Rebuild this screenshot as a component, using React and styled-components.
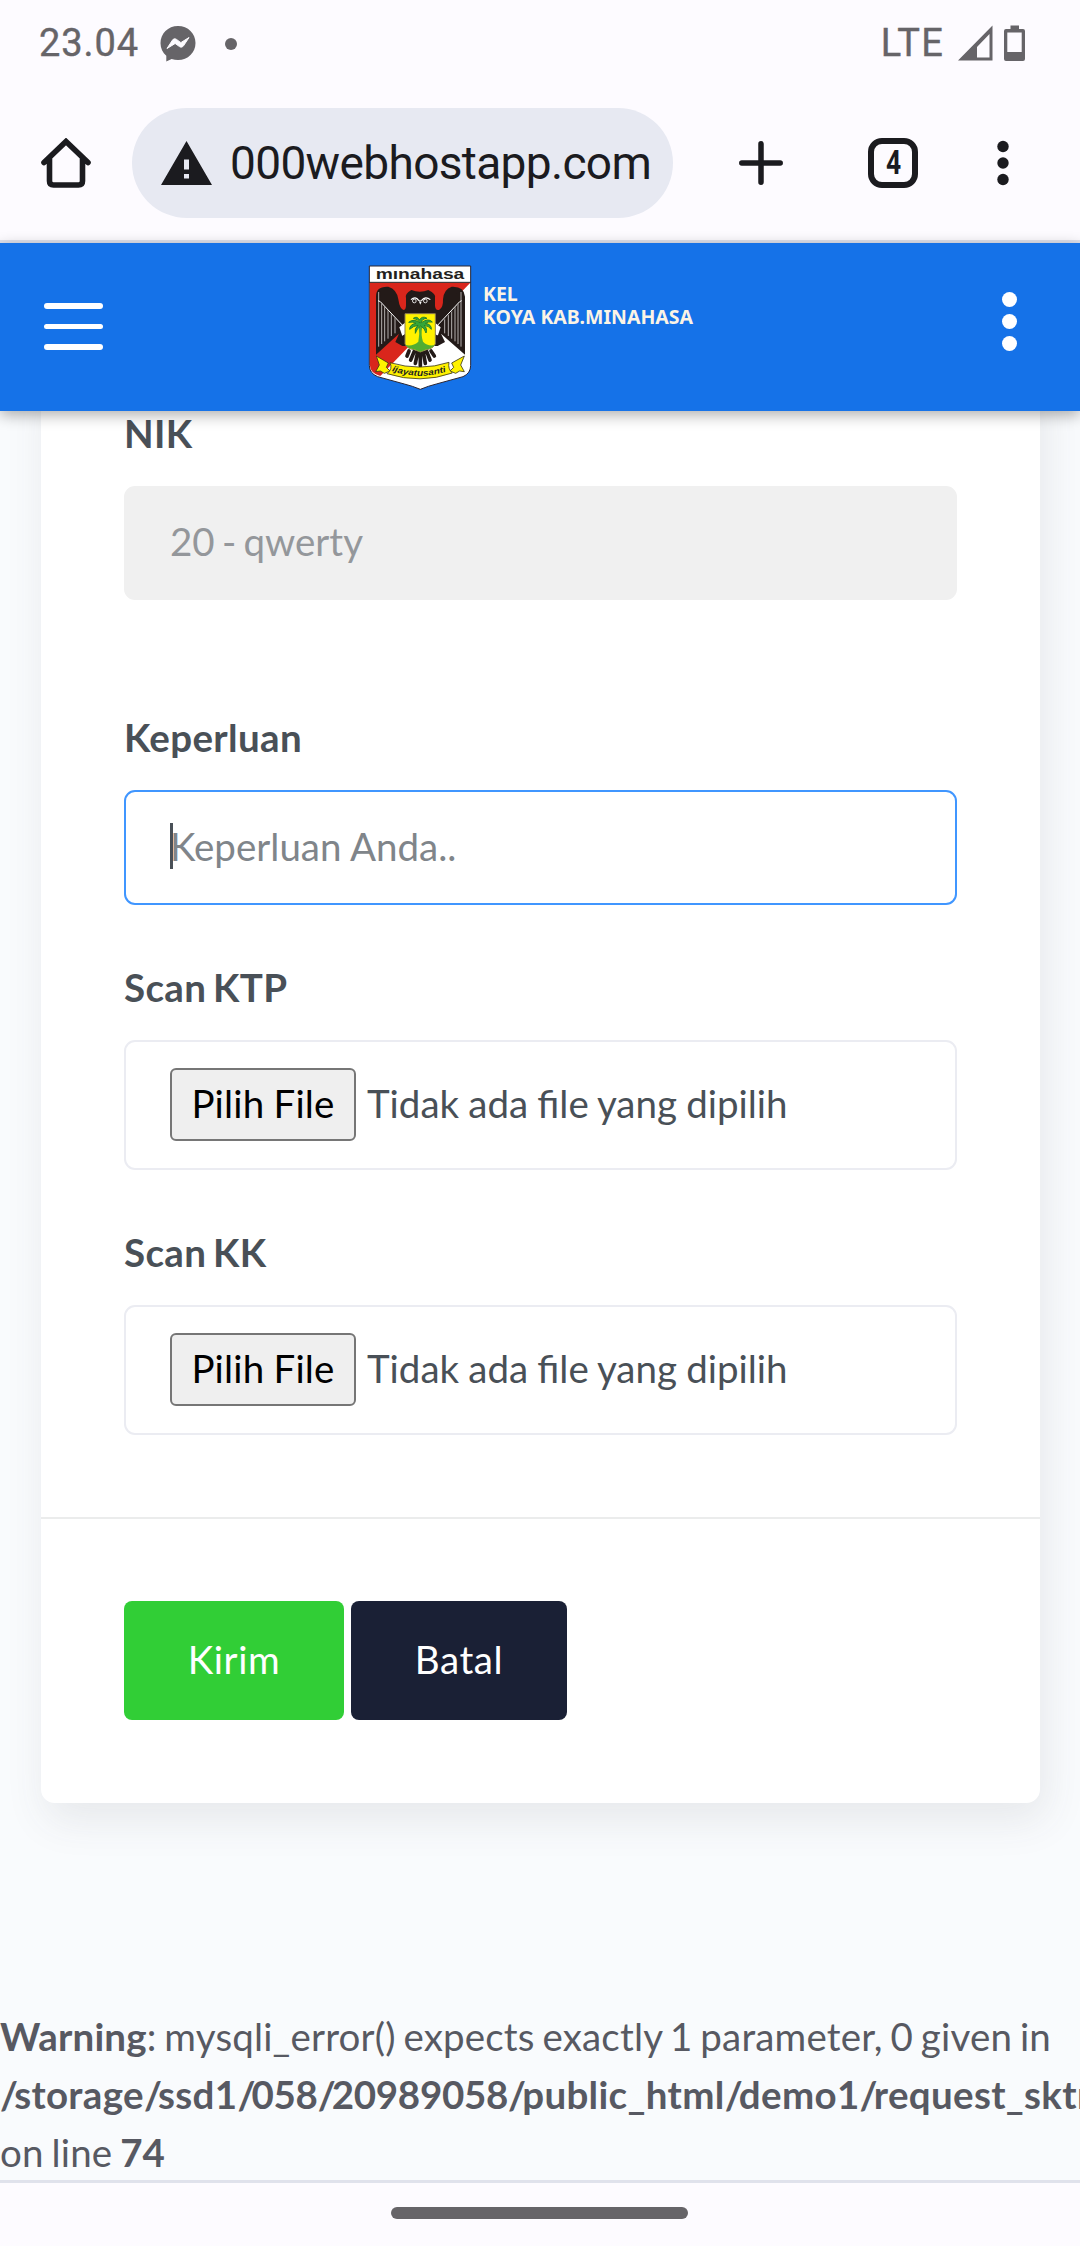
import React, { Fragment } from "react";
import styled, { createGlobalStyle } from "styled-components";

const GlobalStyle = createGlobalStyle`
  * { box-sizing: border-box; }
  body {
    margin: 0;
    background: #fdfbff;
    font-family: Lato, sans-serif;
    -webkit-font-smoothing: antialiased;
  }
`;

const Screen = styled.div`
  width: 1080px;
  height: 2246px;
  display: flex;
  flex-direction: column;
  overflow: hidden;
  background: #fdfbff;
`;

const StatusBar = styled.div`
  height: 84px;
  flex: none;
  display: flex;
  align-items: center;
  padding: 1px 55px 0 39px;
  font-family: Roboto, sans-serif;
  color: #666468;
`;

const Clock = styled.span`
  width: 100px;
  font-size: 38px;
  line-height: 44px;
  letter-spacing: 0.9px;
  -webkit-text-stroke: 0.4px #666468;
`;

const MessengerIcon = styled.svg`
  margin: 2px 0 0 20px;
  width: 38px;
  height: 38px;
`;

const NotificationDot = styled.span`
  width: 12px;
  height: 12px;
  margin: 2px auto 0 28px;
  border-radius: 50%;
  background: #666468;
`;

const NetworkLabel = styled.span`
  font-size: 38px;
  line-height: 44px;
  letter-spacing: 1.2px;
  -webkit-text-stroke: 0.4px #666468;
`;

const StatusIcon = styled.svg`
  margin-left: ${(p) => p.$gap}px;
  width: ${(p) => p.$w}px;
  height: 36px;
`;

const BrowserBar = styled.div`
  height: 159px;
  flex: none;
  display: flex;
  align-items: flex-start;
  padding: 24px 0 0 41px;
  border-bottom: 3px solid #e0e2ec;
`;

const BarIcon = styled.svg`
  flex: none;
  width: ${(p) => p.$w || 50}px;
  height: 50px;
  margin: 30px 0 0 ${(p) => p.$gap || 0}px;
`;

const AddressPill = styled.div`
  width: 541px;
  height: 110px;
  margin-left: 41px;
  padding-left: 29px;
  display: flex;
  align-items: center;
  border-radius: 55px;
  background: #e7e9f2;
  overflow: hidden;
`;

const WarningIcon = styled.svg`
  flex: none;
  width: 52px;
  height: 46px;
`;

const Address = styled.span`
  margin-left: 17px;
  font-family: Roboto, sans-serif;
  font-size: 46px;
  line-height: 56px;
  letter-spacing: -0.65px;
  white-space: nowrap;
  color: #1b1b1f;
`;

const TabCounter = styled.div`
  width: 50px;
  height: 50px;
  margin: 30px 0 0 82px;
  display: flex;
  align-items: center;
  justify-content: center;
  border: 6px solid #1b1b1f;
  border-radius: 14px;
  font-family: Roboto, sans-serif;
  font-weight: 700;
  font-size: 33px;
  line-height: 38px;
  color: #1b1b1f;
`;

const TabNumber = styled.span`
  transform: scaleX(0.8);
`;

const SiteHeader = styled.header`
  position: relative;
  z-index: 1;
  height: 168px;
  flex: none;
  display: flex;
  align-items: flex-start;
  background: #1572e8;
  box-shadow: 0 4px 14px rgba(0, 0, 0, 0.32);
`;

const MenuToggle = styled.div`
  width: 59px;
  margin: 60px 0 0 44px;
  display: flex;
  flex-direction: column;
  gap: 15px;
`;

const MenuLine = styled.span`
  height: 5.5px;
  border-radius: 3px;
  background: #fff;
`;

const Emblem = styled.svg`
  width: 110px;
  height: 132px;
  margin: 19px 0 0 262px;
`;

const BrandName = styled.div`
  width: 240px;
  margin: 39px 0 0 8px;
  font-family: "Noto Sans", sans-serif;
  font-weight: 700;
  font-size: 19.5px;
  line-height: 23px;
  white-space: nowrap;
  color: #fbf4e6;
`;

const MoreDots = styled.div`
  margin: 49px 0 0 279px;
  display: flex;
  flex-direction: column;
  gap: 7px;
`;

const Dot = styled.span`
  width: 15px;
  height: 15px;
  border-radius: 50%;
  background: #fff;
`;

const Page = styled.main`
  height: 1769px;
  flex: none;
  overflow: hidden;
  background: #f9fbfd;
`;

const Card = styled.section`
  height: 1432px;
  margin: -40px 40px 0 41px;
  padding-top: 42px;
  border-radius: 13.75px;
  background: #fff;
  box-shadow: 5.5px 16.5px 41px rgba(69, 65, 78, 0.1);
`;

const Form = styled.div`
  display: flex;
  flex-direction: column;
  padding: 0 83px;
`;

const Group = styled.div`
  margin-bottom: ${(p) => p.$after}px;
`;

const Label = styled.div`
  height: 40px;
  margin-bottom: 33px;
  font-size: 38.5px;
  font-weight: 700;
  line-height: 40px;
  letter-spacing: 0.35px;
  word-spacing: -3px;
  color: #495057;
`;

const borders = { focus: "#4096ff", idle: "#ebecf2", disabled: "#f0f0f0" };

const Field = styled.div`
  height: ${(p) => p.$h}px;
  padding: 0 44px ${(p) => (p.$state === "disabled" ? 4 : 3)}px;
  display: flex;
  align-items: center;
  border: 2px solid ${(p) => borders[p.$state]};
  border-radius: 11px;
  background: ${(p) => (p.$state === "disabled" ? "#f0f0f0" : "#fff")};
  font-size: 38.5px;
  line-height: 46px;
  word-spacing: ${(p) => (p.$state === "disabled" ? -2.6 : 0)}px;
  white-space: nowrap;
  color: ${(p) => (p.$state === "disabled" ? "#94979b" : "#80858a")};
`;

const Caret = styled.span`
  width: 3px;
  height: 46px;
  margin-right: -3px;
  background: #495057;
`;

const FileField = styled(Field)`
  padding: 0 44px 2px;
  word-spacing: -0.7px;
  color: #495057;
`;

const FileButton = styled.span`
  width: 186px;
  height: 73px;
  margin-right: 11px;
  padding-bottom: 2px;
  display: flex;
  align-items: center;
  justify-content: center;
  border: 2px solid #767676;
  border-radius: 6px;
  background: #efefef;
  letter-spacing: 0.15px;
  color: #000;
`;

const FileName = styled.span`
  padding-bottom: 2px;
`;

const Actions = styled.div`
  display: flex;
  gap: 7px;
  padding: 82px 83px 0;
  border-top: 2px solid #ebecec;
`;

const ActionButton = styled.div`
  width: ${(p) => p.$w}px;
  height: 119px;
  padding-bottom: 4px;
  display: flex;
  align-items: center;
  justify-content: center;
  border-radius: 8px;
  background: ${(p) => p.$color};
  font-size: 38.5px;
  letter-spacing: 0.6px;
  color: #fff;
`;

const ServerWarning = styled.p`
  margin: 204px 0 0;
  font-size: 38.5px;
  line-height: 58px;
  letter-spacing: 0.17px;
  word-spacing: -2.2px;
  white-space: nowrap;
  color: #575962;
`;

const PathPart = styled.b`
  letter-spacing: ${(p) => (p.$numeric ? -0.3 : 0.33)}px;
`;

const Slash = styled.b`
  letter-spacing: -3.8px;
`;

const GestureBar = styled.div`
  height: 66px;
  flex: none;
  display: flex;
  justify-content: center;
  padding: 24px 1px 0 0;
  border-top: 3px solid #e0e2ec;
`;

const GestureHandle = styled.span`
  width: 297px;
  height: 12px;
  border-radius: 6px;
  background: #666468;
`;

const wingFeathers = [
  "M41 90V254", "M50 98V246", "M59 108V238", "M69 118V230", "M79 129V222", "M90 140V214",
  "M288 90V254", "M279 98V246", "M270 108V238", "M260 118V230", "M250 129V222", "M239 140V214",
];

function MinahasaEmblem() {
  return (
    <Emblem viewBox="0 0 330 396">
      <path d="M13 12H317V310Q317 334 294 344L214 366Q190 372 166 382Q142 372 118 366L38 344Q13 334 13 310Z" fill="#fff" stroke="#2a2633" strokeWidth="3" />
      <path d="M14.500 62H316L46 342Q15 333 14.500 308Z" fill="#d9261c" />
      <path d="M13 61H317" stroke="#231f20" strokeWidth="3" />
      <text x="165" y="52" textAnchor="middle" textLength="266" lengthAdjust="spacingAndGlyphs" fontFamily="Liberation Sans, sans-serif" fontWeight="700" fontSize="42" fill="#231f20">mınahasa</text>
      <path d="M139 84Q165 94 190 84Q214 96 210 108V132Q212 147 223 143Q235 137 234 112Q236 82 260 74Q298 72 300 104V278L228 215L240 240L218 252H112L91 240L102 215L33 278V104Q32 72 70 74Q96 82 100 112Q104 141 116 144Q124 143 123 126L123 109Q118 96 139 84Z" fill="#231a18" />
      {wingFeathers.map((d) => (
        <path key={d} d={d} stroke="#d8d5d4" strokeWidth="2.400" />
      ))}
      <path d="M48 86L104 146V184L44 119ZM282 86L228 146V184L286 119Z" fill="#231a18" />
      <path d="M39 116L46 119L120 198M290 116L284 119L210 198" stroke="#fff" strokeWidth="3" fill="none" />
      <path d="M103 196L120 182V216L112 222ZM227 196L210 182V216L218 222Z" fill="#fff" />
      <path d="M112 222L119 218V252L111 246ZM214 218L222 222L218 250H212Z" fill="#231a18" />
      <path d="M138 113Q151 101 161 115Q165 119 170 115Q181 101 196 113" stroke="#fff" strokeWidth="3.500" fill="none" />
      <circle cx="148" cy="117" r="5.500" fill="#231a18" stroke="#fff" strokeWidth="2.500" />
      <circle cx="181" cy="117" r="5.500" fill="#231a18" stroke="#fff" strokeWidth="2.500" />
      <path d="M162 119L166 128L170 119Z" fill="#fff" />
      <path d="M132 267L126 282M148 268L137 294M158 270L151 304M166 270V311M175 270L181 304M185 268L195 294M198 267L208 282" stroke="#231a18" strokeWidth="11" strokeLinecap="round" />
      <path d="M120 155H211V246Q203 261 184 263L166 270L148 263Q127 261 120 246Z" fill="#fff200" stroke="#8b7c50" strokeWidth="3" />
      <path d="M122 249Q143 254 160 239Q165 218 161 193H172Q167 220 174 239Q189 254 209 249Q199 261 184 262L166 269L148 262Q130 260 122 249Z" fill="#52ad32" />
      <path d="M166 183Q146 168 131 181Q146 178 153 184Q134 187 134 202Q146 191 159 190Q147 200 151 214Q155 199 167 192Q180 199 183 213Q188 198 177 190Q191 191 199 202Q200 187 181 184Q189 178 202 180Q190 167 169 182Q170 170 186 169Q172 160 163 174Q157 161 145 169Q158 170 166 183Z" fill="#35a638" stroke="#26802b" strokeWidth="3" strokeLinejoin="round" />
      <path d="M34 282L70 303L64 316L75 327L58 334L46 327L32 329L43 309ZM298 282L260 303L266 316L255 327L272 334L284 327L298 329L287 309Z" fill="#fff200" stroke="#3d3917" strokeWidth="2.500" strokeLinejoin="round" />
      <path d="M75 302Q166 329 252 301Q248 321 262 333Q166 367 66 335Q84 321 75 302Z" fill="#fff200" stroke="#3d3917" strokeWidth="2.500" />
      <path id="motto-curve" d="M80 327Q165 355 250 327" fill="none" />
      <text textLength="166" lengthAdjust="spacingAndGlyphs" fontFamily="Liberation Sans, sans-serif" fontWeight="700" fontStyle="italic" fontSize="25" fill="#231f20">
        <textPath href="#motto-curve">ijayatusanti</textPath>
      </text>
    </Emblem>
  );
}

function FileInput() {
  return (
    <FileField $h={130} $state="idle">
      <FileButton>Pilih File</FileButton>
      <FileName>Tidak ada file yang dipilih</FileName>
    </FileField>
  );
}

const scriptPath = [
  { name: "storage" },
  { name: "ssd1" },
  { name: "058", numeric: true },
  { name: "20989058", numeric: true },
  { name: "public_html" },
  { name: "demo1" },
  { name: "request_sktm" },
];

export default function App() {
  return (
    <Screen>
      <GlobalStyle />
      <StatusBar>
        <Clock>23.04</Clock>
        <MessengerIcon viewBox="0 0 38 38">
          <path d="M19 1C9 1 1.500 8.500 1.500 18.200c0 5 2.200 9.300 5.800 12.600v5.600l5.300-2.300c2 .6 4.200.9 6.400.9 10 0 17.500-7.500 17.500-17S29 1 19 1Z" fill="#666468" />
          <path d="M8 23.500l5.500-8.400c.9-1.400 2.700-1.700 4-.7l3.700 2.800c.4.300.9.300 1.300 0l7.500-4.700-5.500 8.300c-.9 1.400-2.700 1.800-4 .8l-3.700-2.700c-.4-.3-.9-.3-1.300 0Z" fill="#fdfbff" stroke="#fdfbff" strokeWidth="1" />
        </MessengerIcon>
        <NotificationDot />
        <NetworkLabel>LTE</NetworkLabel>
        <StatusIcon $gap={14} $w={35} viewBox="0 0 35 36">
          <path fillRule="evenodd" d="M0 35.500L34.500.5V35.500ZM19 32.500H31.500V9L19 22Z" fill="#666468" />
        </StatusIcon>
        <StatusIcon $gap={11} $w={21} viewBox="0 0 21 36">
          <path fillRule="evenodd" d="M6.500 0.500H15V4H19Q21 4 21 6V34Q21 36 19 36H2Q0 36 0 34V6Q0 4 2 4H6.500ZM3.300 7.500V27H17.700V7.500Z" fill="#666468" />
        </StatusIcon>
      </StatusBar>

      <BrowserBar>
        <BarIcon viewBox="0 0 50 50">
          <path d="M3 24.500L25 3.500L47 24.500M8.500 21V43Q8.500 47 12.500 47H37.500Q41.500 47 41.500 43V21" fill="none" stroke="#1b1b1f" strokeWidth="5.600" strokeLinecap="round" />
        </BarIcon>
        <AddressPill>
          <WarningIcon viewBox="0 0 52 46">
            <path fillRule="evenodd" d="M25.500 1L51 45H0ZM23 19.500V29.500H28V19.500ZM23 34V38.500H28V34Z" fill="#1b1b1f" />
          </WarningIcon>
          <Address>000webhostapp.com</Address>
        </AddressPill>
        <BarIcon $gap={63} viewBox="0 0 50 50">
          <path d="M25 5.800V44.200M5.800 25H44.200" stroke="#1b1b1f" strokeWidth="5.500" strokeLinecap="round" />
        </BarIcon>
        <TabCounter>
          <TabNumber>4</TabNumber>
        </TabCounter>
        <BarIcon $gap={79} $w={12} viewBox="0 0 12 50">
          <circle cx="6" cy="8.500" r="5.700" fill="#1b1b1f" />
          <circle cx="6" cy="25" r="5.700" fill="#1b1b1f" />
          <circle cx="6" cy="41.500" r="5.700" fill="#1b1b1f" />
        </BarIcon>
      </BrowserBar>

      <SiteHeader>
        <MenuToggle>
          <MenuLine />
          <MenuLine />
          <MenuLine />
        </MenuToggle>
        <MinahasaEmblem />
        <BrandName>
          KEL
          <br />
          KOYA KAB.MINAHASA
        </BrandName>
        <MoreDots>
          <Dot />
          <Dot />
          <Dot />
        </MoreDots>
      </SiteHeader>

      <Page>
        <Card>
          <Form>
            <Group $after={117}>
              <Label>NIK</Label>
              <Field $h={114} $state="disabled">20 - qwerty</Field>
            </Group>
            <Group $after={62}>
              <Label>Keperluan</Label>
              <Field $h={115} $state="focus">
                <Caret />
                <span>Keperluan Anda..</span>
              </Field>
            </Group>
            <Group $after={62}>
              <Label>Scan KTP</Label>
              <FileInput />
            </Group>
            <Group $after={82}>
              <Label>Scan KK</Label>
              <FileInput />
            </Group>
          </Form>
          <Actions>
            <ActionButton $w={220} $color="#31ce36">Kirim</ActionButton>
            <ActionButton $w={216} $color="#1a2035">Batal</ActionButton>
          </Actions>
        </Card>
        <ServerWarning>
          <b>Warning</b>: mysqli_error() expects exactly 1 parameter, 0 given in
          <br />
          {scriptPath.map(({ name, numeric }) => (
            <Fragment key={name}>
              <Slash>/</Slash>
              <PathPart $numeric={numeric}>{name}</PathPart>
            </Fragment>
          ))}
          <br />
          on line <b>74</b>
        </ServerWarning>
      </Page>

      <GestureBar>
        <GestureHandle />
      </GestureBar>
    </Screen>
  );
}
